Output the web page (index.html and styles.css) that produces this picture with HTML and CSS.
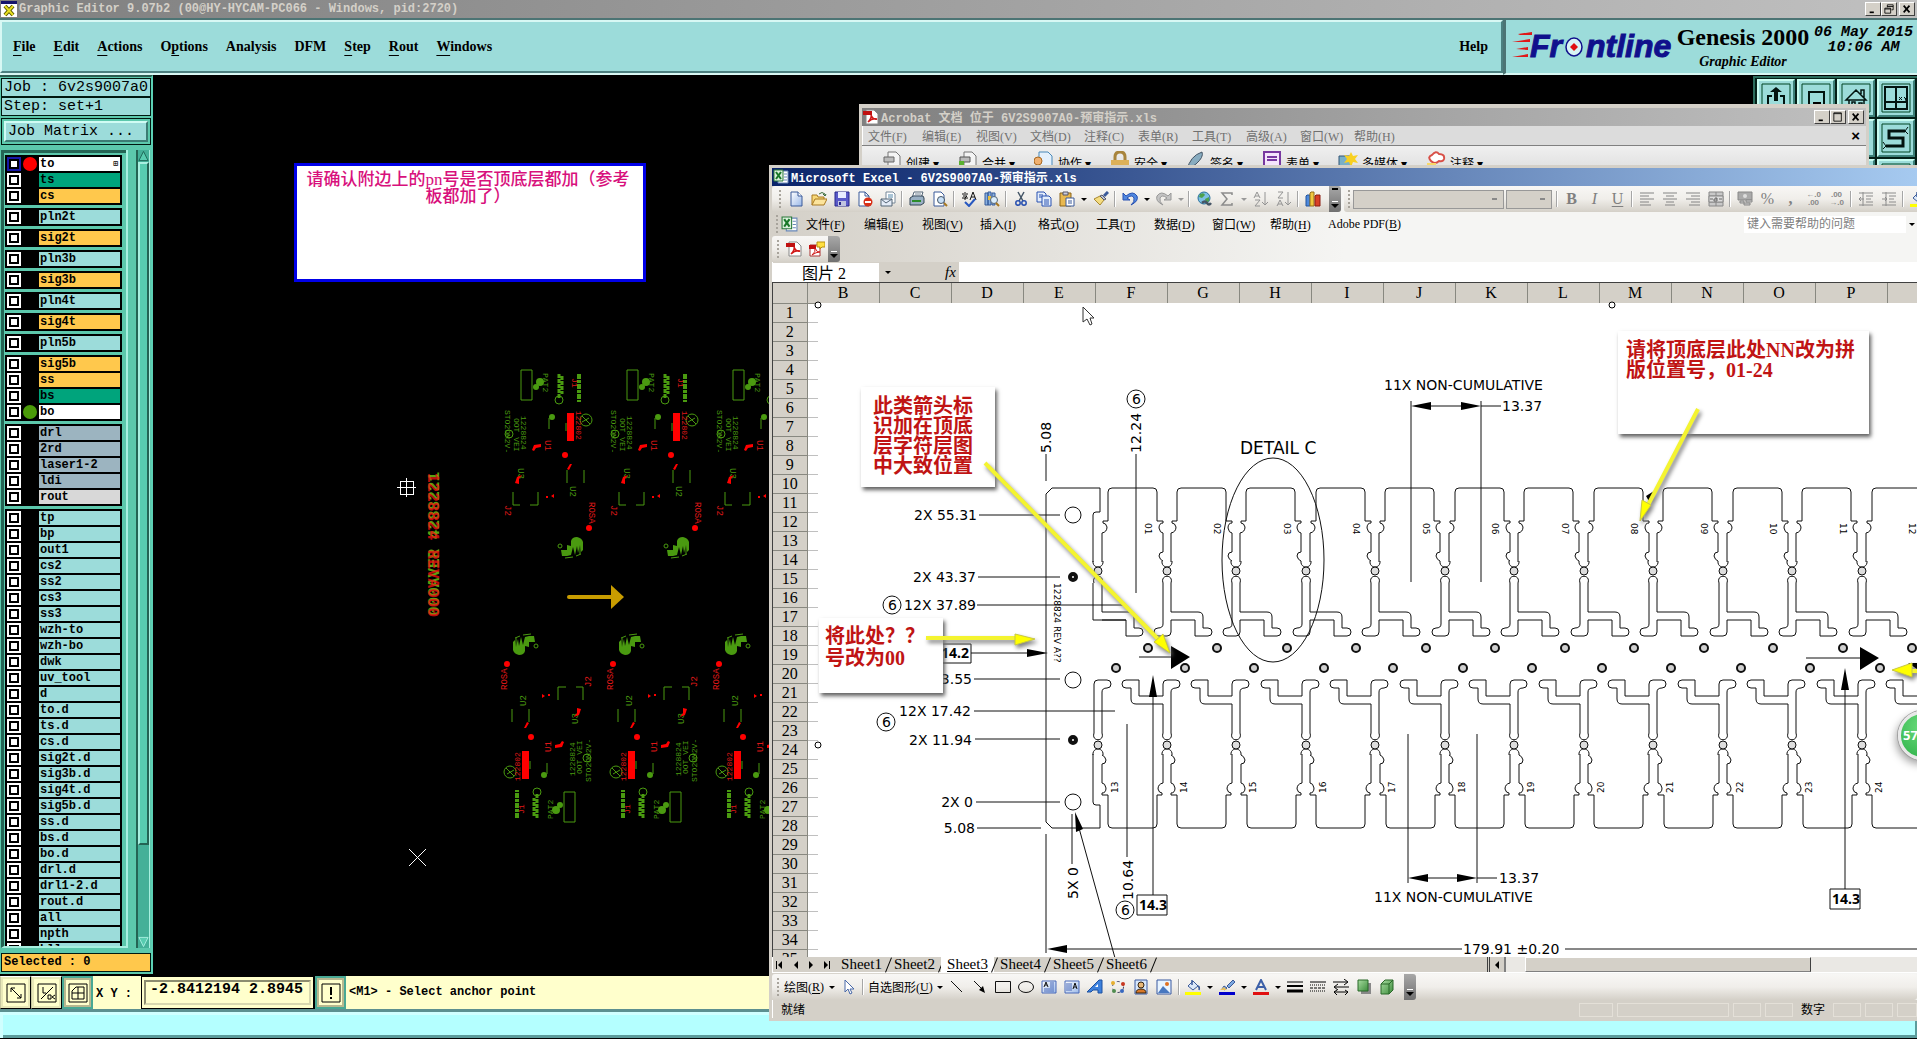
FILE: index.html
```html
<!DOCTYPE html>
<html lang="zh-CN">
<head>
    <meta charset="UTF-8">
    <meta name="viewport" content="width=device-width, initial-scale=1.0">
    <title>Graphic Editor 9.07b2</title>
    <link rel="stylesheet" href="styles.css">
</head>
<body>
<svg class="sprite" aria-hidden="true">
    <defs>
        <linearGradient id="blue" x1="0" y1="0" x2="1" y2="1"><stop offset="0" stop-color="#fff"/><stop offset="1" stop-color="#9ab8e8"/></linearGradient>
        <linearGradient id="green" x1="0" y1="0" x2="1" y2="1"><stop offset="0" stop-color="#a8dca0"/><stop offset="1" stop-color="#3c8c3c"/></linearGradient>
    </defs>
    <symbol id="i-new" viewBox="0 0 16 16"><path d="M3 1h7l4 4v10H3z" fill="url(#blue)" stroke="#3a5a9a"/><path d="M10 1v4h4" fill="#fff" stroke="#3a5a9a"/></symbol>
    <symbol id="i-open" viewBox="0 0 16 16"><path d="M1 14V4h5l1 2h6v3" fill="#f8d878" stroke="#a87820"/><path d="M1 14l3-6h12l-3 6z" fill="#fce49c" stroke="#a87820"/><path d="M8 3q3-3 6 0v2m-2-2l2 2 1-2" fill="none" stroke="#3a6a3a"/></symbol>
    <symbol id="i-save" viewBox="0 0 16 16"><path d="M1 1h14v14H1z" fill="#5a5ac8" stroke="#28288c"/><path d="M4 1h8v6H4z" fill="#e8ecff"/><path d="M4 10h8v5H4z" fill="#c0c4e0"/><path d="M5 11h2v3H5z" fill="#28288c"/></symbol>
    <symbol id="i-perm" viewBox="0 0 16 16"><path d="M2 1h6l4 4v10H2z" fill="#fff" stroke="#3a5a9a"/><path d="M8 1v4h4" fill="none" stroke="#3a5a9a"/><circle cx="11" cy="11" r="4.500" fill="#d83018"/><path d="M8 11h6" stroke="#fff" stroke-width="2"/></symbol>
    <symbol id="i-mail" viewBox="0 0 16 16"><path d="M6 1h7l2 2v9H6z" fill="#fff" stroke="#789"/><path d="M8 4h5M8 6h5" stroke="#58a"/><path d="M1 8h11v7H1z" fill="#e4ecf8" stroke="#567"/><path d="M1 8l5 4 6-4" fill="none" stroke="#567"/></symbol>
    <symbol id="i-print" viewBox="0 0 16 16"><path d="M5 1h9l-2 6H3z" fill="#fff" stroke="#567"/><path d="M1 7l3-2h10l1 2v5l-3 2H1z" fill="#9ab0c4" stroke="#345"/><path d="M3 10h9" stroke="#2c8c2c" stroke-width="2"/><path d="M6 3h6M5 5h6" stroke="#789"/></symbol>
    <symbol id="i-preview" viewBox="0 0 16 16"><path d="M2 1h7l3 3v11H2z" fill="#fff" stroke="#3a5a9a"/><circle cx="9" cy="9" r="3.500" fill="#c8e0f8" stroke="#456"/><path d="M12 12l3 3" stroke="#a87820" stroke-width="2"/></symbol>
    <symbol id="i-spell" viewBox="0 0 16 16"><path d="M1 3h6M4 1v1M2 5h4L4 7v2M1 7h6M9 9l3-8 3 8M10 6h4" fill="none" stroke="#111"/><path d="M4 11l4 4 6-7" fill="none" stroke="#2858c0" stroke-width="2"/></symbol>
    <symbol id="i-research" viewBox="0 0 16 16"><path d="M1 2h3v12H1zM4 1h3v13H4zM8 2h3v12H8z" fill="#8ab0e0" stroke="#345a9a"/><path d="M4 5h3v4H4z" fill="#e8c040"/><circle cx="10" cy="9" r="3.500" fill="#dceefc" stroke="#567"/><path d="M12 12l3 3" stroke="#a87820" stroke-width="2"/></symbol>
    <symbol id="i-cut" viewBox="0 0 16 16"><path d="M5 1l5 9M11 1l-5 9" stroke="#456" stroke-width="1.500"/><circle cx="5" cy="12" r="2.200" fill="none" stroke="#2850b0" stroke-width="1.500"/><circle cx="11" cy="12" r="2.200" fill="none" stroke="#2850b0" stroke-width="1.500"/></symbol>
    <symbol id="i-copy" viewBox="0 0 16 16"><path d="M1 1h7l2 2v8H1z" fill="#e4eefc" stroke="#2850b0"/><path d="M6 5h7l2 2v8H6z" fill="#e4eefc" stroke="#2850b0"/><path d="M8 9h5M8 11h5M8 13h5M3 4h4M3 6h3" stroke="#2850b0"/></symbol>
    <symbol id="i-paste" viewBox="0 0 16 16"><path d="M1 2h11v13H1z" fill="#e8b850" stroke="#8c6418"/><path d="M4 1h5v3H4z" fill="#ccd" stroke="#556"/><path d="M7 7h8v8H7z" fill="#fff" stroke="#3a5a9a"/><path d="M9 10h4M9 12h4" stroke="#3a5a9a"/></symbol>
    <symbol id="i-brush" viewBox="0 0 16 16"><path d="M1 8l6 6 4-5-4-4z" fill="#f4dc80" stroke="#a88830"/><path d="M7 5l4 4 2-1-4-4z" fill="#bcc4d4" stroke="#556"/><path d="M11 5l4-4" stroke="#3a5a9a" stroke-width="3"/></symbol>
    <symbol id="i-undo" viewBox="0 0 16 16"><path d="M1 2v7h7L5 7q5-4 7 0 1 4-3 7 8-4 6-9-4-6-11 0z" fill="#5088e0" stroke="#2850b0"/></symbol>
    <symbol id="i-redo" viewBox="0 0 16 16"><path d="M15 2v7H8l3-2Q6 3 4 7q-1 4 3 7-8-4-6-9 4-6 11 0z" fill="#c4c4c4" stroke="#989898"/></symbol>
    <symbol id="i-link" viewBox="0 0 16 16"><circle cx="8" cy="7" r="6" fill="#7cc0e4" stroke="#28709c"/><path d="M4 3q4-2 5 1l-3 3-3-1zM9 8l4-2v4l-3 2z" fill="#4ca04c"/><path d="M6 12q3-3 5 0t4 0" fill="none" stroke="#456" stroke-width="2.500"/></symbol>
    <symbol id="i-sum" viewBox="0 0 16 16"><path d="M13 4V2H3l5 6-5 6h10v-2" fill="none" stroke="#8c8c8c" stroke-width="1.500"/></symbol>
    <symbol id="i-sort" viewBox="0 0 16 16"><path d="M1 7l3-6 3 6M2 5h4M2 9h5l-5 6h5M12 1v13M9 11l3 3 3-3" fill="none" stroke="#949494"/></symbol>
    <symbol id="i-sortd" viewBox="0 0 16 16"><path d="M2 1h5L2 7h5M1 15l3-6 3 6M2 13h4M12 1v13M9 11l3 3 3-3" fill="none" stroke="#949494"/></symbol>
    <symbol id="i-chart" viewBox="0 0 16 16"><path d="M1 5l1-1h3v11H1z" fill="#4c88dc" stroke="#23549c"/><path d="M5 2l1-1h3v14H5z" fill="#f0c840" stroke="#94701c"/><path d="M10 5l1-1h4v11h-5z" fill="#d84028" stroke="#8c1c10"/></symbol>
    <symbol id="i-left" viewBox="0 0 16 16"><path d="M1 2h14M1 5h9M1 8h14M1 11h9M1 14h11" stroke="#848484"/></symbol>
    <symbol id="i-center" viewBox="0 0 16 16"><path d="M1 2h14M4 5h8M1 8h14M4 11h8M3 14h10" stroke="#848484"/></symbol>
    <symbol id="i-right" viewBox="0 0 16 16"><path d="M1 2h14M6 5h9M1 8h14M6 11h9M4 14h11" stroke="#848484"/></symbol>
    <symbol id="i-merge" viewBox="0 0 16 16"><path d="M1 1h14v14H1zM1 5h14M1 11h14M8 1v4M8 11v4" fill="#c8c8c8" stroke="#888"/><path d="M1 5h14v6H1z" fill="#ddd" stroke="#888"/><path d="M2 8h3M11 8h3M7 7h2v3H6V8h3" fill="none" stroke="#666"/></symbol>
    <symbol id="i-money" viewBox="0 0 16 16"><path d="M1 1h14v8H1z" fill="#aaa" stroke="#888"/><circle cx="8" cy="5" r="2" fill="#ddd"/><path d="M9 9h6v2H9zM7 12h6v2H7zM3 10h4v2H3z" fill="#ccc" stroke="#888"/></symbol>
    <symbol id="i-indent" viewBox="0 0 16 16"><path d="M1 2h14M8 5h7M8 8h5M8 11h7M1 14h14M5 1v14M1 8h5M3 6L1 8l2 2" fill="none" stroke="#8c8c8c"/></symbol>
    <symbol id="i-outdent" viewBox="0 0 16 16"><path d="M1 2h14M8 5h7M8 8h5M8 11h7M1 14h14M5 1v14M1 8h5M4 6l2 2-2 2" fill="none" stroke="#8c8c8c"/></symbol>
    <symbol id="i-fill" viewBox="0 0 16 16"><path d="M3 7l5-5 5 5-5 4z" fill="#dce8f8" stroke="#3a5a9a"/><path d="M7 6V1M13 7q2 1 1 4" fill="none" stroke="#3a5a9a" stroke-width="1.500"/><path d="M0 13h16v3H0z" fill="#ff0"/></symbol>
    <symbol id="i-pen" viewBox="0 0 16 16"><path d="M3 10q3 2 5-1l-3-2zM8 7l6-6 2 2-6 6z" fill="#7ca8e0" stroke="#3a5a9a"/><path d="M1 11l4-3 3 3z" fill="#e8c060"/><path d="M0 13h16v3H0z" fill="#00c"/></symbol>
    <symbol id="i-fontcolor" viewBox="0 0 16 16"><path d="M3 11l5-10 5 10M5 8h6" fill="none" stroke="#3c60a8" stroke-width="2"/><path d="M0 13h16v3H0z" fill="#e01010"/></symbol>
    <symbol id="i-pdf" viewBox="0 0 16 16"><path d="M3 1h8l4 4v10H3z" fill="#fff" stroke="#888"/><path d="M0 2h9v4H0z" fill="#c01010"/><path d="M5 13q4-4 3-7 2 5 6 4-5-1-9 3z" fill="none" stroke="#d01818" stroke-width="1.500"/></symbol>
    <symbol id="i-pdfmail" viewBox="0 0 16 16"><path d="M1 4h10v11H1z" fill="#fff" stroke="#a33"/><path d="M0 4h7v4H0z" fill="#c01010"/><path d="M3 14q4-3 3-7 2 5 5 4-4 0-8 3z" fill="none" stroke="#d01818"/><path d="M8 1h8v5h-3l-2 2V6H8z" fill="#ffe040" stroke="#b89010"/></symbol>
    <symbol id="i-excel" viewBox="0 0 16 16"><path d="M5 2h10v12H5z" fill="#fff" stroke="#6888b8"/><path d="M11 5h3M11 8h3M11 11h3" stroke="#6888b8"/><path d="M1 1h9v11H1z" fill="#dcf0dc" stroke="#287838"/><path d="M3 3l5 7M8 3l-5 7" stroke="#187828" stroke-width="2"/></symbol>
    <symbol id="i-pointer" viewBox="0 0 16 16"><path d="M4 1v12l3-3 2 5 2-1-2-4h4z" fill="#fff" stroke="#4868a8"/></symbol>
    <symbol id="i-line" viewBox="0 0 16 16"><path d="M2 2l11 11" stroke="#111"/></symbol>
    <symbol id="i-arrow" viewBox="0 0 16 16"><path d="M2 2l9 9" stroke="#111"/><path d="M13 14l-6-3 4-4z"/></symbol>
    <symbol id="i-rect" viewBox="0 0 16 16"><path d="M0.500 2.500h15v11h-15z" fill="none" stroke="#111"/></symbol>
    <symbol id="i-oval" viewBox="0 0 16 16"><ellipse cx="8" cy="8" rx="7.500" ry="5.500" fill="none" stroke="#111"/></symbol>
    <symbol id="i-text" viewBox="0 0 16 16"><path d="M1 2h14v12H1z" fill="url(#blue)" stroke="#4868b8"/><path d="M3 8l2-5 2 5M4 6h2" fill="none" stroke="#111"/><path d="M9 4h4M9 6h4M9 8h4M3 10h10M3 12h10" stroke="#4868b8"/></symbol>
    <symbol id="i-vtext" viewBox="0 0 16 16"><path d="M1 2h14v12H1z" fill="url(#blue)" stroke="#4868b8"/><path d="M3 4v8M5 4v8M7 4v8" stroke="#4868b8"/><path d="M9 10l2-6 2 6M10 8h2" fill="none" stroke="#111"/></symbol>
    <symbol id="i-wordart" viewBox="0 0 16 16"><path d="M0 13L12 1h3v13h-4v-3H6l-2 2z" fill="#3c80dc" stroke="#1c50a0"/><path d="M8 8l3-3v3z" fill="#fff"/></symbol>
    <symbol id="i-diagram" viewBox="0 0 16 16"><circle cx="8" cy="8" r="5.500" fill="none" stroke="#446" stroke-dasharray="3 3"/><circle cx="3" cy="4" r="2" fill="#e8b030"/><circle cx="13" cy="5" r="2" fill="#c83820"/><circle cx="12" cy="12" r="2" fill="#3868c0"/><circle cx="4" cy="12" r="2" fill="#508c50"/></symbol>
    <symbol id="i-clip" viewBox="0 0 16 16"><path d="M2 1h12v14H2z" fill="#d8e8fc" stroke="#3858a0"/><circle cx="8" cy="6" r="3" fill="#e8b878" stroke="#321"/><path d="M3 14q0-4 5-4t5 4z" fill="#d87828" stroke="#321"/></symbol>
    <symbol id="i-image" viewBox="0 0 16 16"><path d="M1 1h14v14H1z" fill="#e8f4ff" stroke="#3858a0"/><circle cx="11" cy="5" r="2" fill="#e07020"/><path d="M2 14l5-7 7 7z" fill="#4878c0"/></symbol>
    <symbol id="i-weight" viewBox="0 0 16 16"><path d="M0 3h16" stroke="#000" stroke-width="1"/><path d="M0 7h16" stroke="#000" stroke-width="2"/><path d="M0 12h16" stroke="#000" stroke-width="3"/></symbol>
    <symbol id="i-dash" viewBox="0 0 16 16"><path d="M0 3h16" stroke="#000"/><path d="M0 6h16M0 12h16" stroke="#000" stroke-dasharray="1 1"/><path d="M0 9h16" stroke="#000" stroke-dasharray="3 1"/></symbol>
    <symbol id="i-arrows" viewBox="0 0 16 16"><path d="M0 3h14M2 8h14M1 13h14M11 0l4 3-4 3M5 5L1 8l4 3M4 11l-3 2 3 3M12 11l3 2-3 3" fill="none" stroke="#000"/></symbol>
    <symbol id="i-shadow" viewBox="0 0 16 16"><path d="M5 4h10v11H5z" fill="#888"/><path d="M2 1h10v11H2z" fill="url(#green)" stroke="#286828"/></symbol>
    <symbol id="i-cube" viewBox="0 0 16 16"><path d="M2 5l4-4h8v10l-4 4H2z" fill="url(#green)" stroke="#286828"/><path d="M2 5h8v10M10 5l4-4" fill="none" stroke="#286828"/></symbol>
</svg>

<div class="genesis">
    <div class="titlebar inactive">
        <svg class="app-icon" viewBox="0 0 16 16"><path d="M0 0h16v16H0z" fill="#fff"/><path d="M0 0h16v3H0z" fill="#14146c"/><path d="M4 5l8 9M12 5l-8 9" stroke="#555500" stroke-width="4"/><path d="M4 5l8 9M12 5l-8 9" stroke="#e8e020" stroke-width="2"/></svg>
        <span class="title">Graphic Editor 9.07b2 (00@HY-HYCAM-PC066 - Windows, pid:2720)</span>
        <button class="win-btn" title="Minimize"><svg viewBox="0 0 12 12"><path d="M2 9h5v2H2z"/></svg></button>
        <button class="win-btn" title="Restore"><svg viewBox="0 0 12 12"><path d="M4 1h7v6H9M4 3h7M4 1v3M1 5h7v6H1zM1 6h7" fill="none" stroke="#000"/></svg></button>
        <button class="win-btn close" title="Close"><svg viewBox="0 0 12 12"><path d="M2 2l7 8M9 2l-7 8" stroke="#000" stroke-width="2"/></svg></button>
    </div>

    <header class="top">
        <nav class="menu">
            <a href="#"><u>F</u>ile</a><a href="#"><u>E</u>dit</a><a href="#"><u>A</u>ctions</a><a href="#">O<u>p</u>tions</a><a href="#">Analysis</a><a href="#">DFM</a><a href="#"><u>S</u>tep</a><a href="#"><u>R</u>out</a><a href="#"><u>W</u>indows</a>
            <a href="#" class="help">Help</a>
        </nav>
        <div class="brand">
            <svg class="logo" width="162" height="36">
                <g fill="#e01818"><path d="M6 4l14-2v3H8zM0 12l18-3v3zM4 19l12-2v3zM0 27l16-3v3z"/></g>
                <g class="logo-text"><text x="18" y="27">Fr</text><text x="74" y="27">ntline</text></g>
                <ellipse cx="62" cy="17" rx="8" ry="9" fill="#d8f4f4" stroke="#10108c" stroke-width="1.500"/>
                <path d="M62 13l4 4-4 4-4-4z" fill="#e01010"/>
            </svg>
            <div class="product"><b>Genesis 2000</b><i>Graphic Editor</i></div>
            <div class="clock"><span>06 May 2015</span><span>10:06 AM</span></div>
        </div>
    </header>

    <main class="work">
        <aside class="side">
            <div class="info">Job : 6v2s9007a0</div>
            <div class="info">Step: set+1</div>
            <div class="matrix"><button>Job Matrix ...</button></div>
            <div class="layers">
                <div class="layer-list" id="layers"></div>
                <div class="scroll">
                    <button class="up" title="Up"><svg viewBox="0 0 12 12"><path d="M6 1l5 10H1z" fill="#58ccb0" stroke="#1c6454"/></svg></button>
                    <div class="thumb"></div>
                    <button class="down" title="Down"><svg viewBox="0 0 12 12"><path d="M6 11L1 1h10z" fill="#58ccb0" stroke="#a8f0e0"/></svg></button>
                </div>
            </div>
            <div class="selected">Selected : 0</div>
        </aside>

        <div class="canvas">
            <svg class="board-view">
                <g transform="translate(-153 -75)">
                    <g fill="none" stroke="#fff" shape-rendering="crispEdges">
                        <path d="M400 481h13v13h-13zM397 487h19M406 478v19"/>
                    </g>
                    <path d="M409 849l17 17M426 849l-17 17" stroke="#fff"/>
                    <g class="pn">
                        <text class="pn-green" transform="translate(439 616) rotate(-90)">000AVER 4288221</text>
                        <text class="pn-red" transform="translate(428 473) rotate(90)">1228824 REVA000</text>
                    </g>
                    <path d="M569 597h42" stroke="#c89c00" stroke-width="4" stroke-linecap="round"/>
                    <path d="M611 585l13 12-13 12z" fill="#c89c00"/>
                    <!-- first placement of the silkscreen, repeated by script.js -->
                    <g transform="translate(503 360)">
                        <g id="silk">
                            <g fill="none" stroke="#4a9a10">
                                <path d="M18 10h11v30H18zM46 69V58M64 110v13M81 110v13M10 132v13h7M27 145h8v-13M63 63v8M77 183v11"/>
                                <circle cx="83" cy="60" r="6"/><path d="M79 56l8 8M79 62l7-4"/>
                                <circle cx="6" cy="74" r="4"/><circle cx="56" cy="40" r="4"/>
                                <path d="M56 14v24M59 16v18" stroke-width="3" stroke-dasharray="4 1"/>
                                <path d="M76 14v28" stroke-width="4" stroke-dasharray="5 1 3 1"/>
                                <path d="M62 198l8-1M73 196l5-2"/>
                                <circle cx="57" cy="186" r="2"/>
                            </g>
                            <g fill="#4a9a10">
                                <circle cx="37" cy="22" r="4"/><circle cx="33" cy="27" r="3"/><circle cx="49" cy="57" r="3"/>
                                <path d="M58 190h6v-5l4 1v-5q1-4 6-4 5 1 6 5v8l-2 2-1-7-2 8-1-7-2 9-2-8-2 8-4 1-5 0z"/>
                            </g>
                            <g class="silk-green">
                                <text transform="translate(40 13) rotate(90)">PAT2</text>
                                <text transform="translate(2 50) rotate(90)">STO2OM2V-</text>
                                <text transform="translate(11 58) rotate(90)">OOT VEI</text>
                                <text transform="translate(18 56) rotate(90)">1228824</text>
                            </g>
                            <g class="silk-big silk-green">
                                <text transform="translate(15 108) rotate(90)">U3</text>
                                <text transform="translate(67 126) rotate(90)">U2</text>
                            </g>
                            <g fill="#f00">
                                <path d="M64 53h7v28h-7z"/><circle cx="62" cy="95" r="3"/><circle cx="86" cy="168" r="3"/>
                                <path d="M29 90l2-5 7-1v3l-5 1-2 3zM64 109l3-5h2l-3 6zM12 123l2-6 5-2-3 4v5zM43 136h2v2h-2zM48 136l3-2v4z"/>
                            </g>
                            <g class="silk-red">
                                <text transform="translate(73 51) rotate(90)">122802</text>
                                <text transform="translate(69 18) rotate(90)">J1</text>
                            </g>
                            <g class="silk-big silk-red">
                                <text transform="translate(42 80) rotate(90)">U1</text>
                                <text transform="translate(2 145) rotate(90)">J2</text>
                                <text transform="translate(86 142) rotate(90)">ROSA</text>
                            </g>
                        </g>
                    </g>
                    <g id="silks"></g>
                </g>
            </svg>
            <div class="note-blue">请确认附边上的pn号是否顶底层都加（参考板都加了）</div>
            <div class="tools">
                <button title="Export"><svg viewBox="0 0 30 30"><path d="M1 1h28v28H1z" fill="none" stroke="#042"/><path d="M15 4l6 5h-4v9h-4V9H9z" fill="#021410"/><path d="M11 13H7v18M19 13h4v18" fill="none" stroke="#021410" stroke-width="2"/></svg></button>
                <button title="Screen"><svg viewBox="0 0 30 30"><path d="M1 1h28v28H1z" fill="none" stroke="#042"/><path d="M8 9h15v14H8z" fill="none" stroke="#021410" stroke-width="2"/><path d="M12 19h8v4h-8z"/></svg></button>
                <button title="Home"><svg viewBox="0 0 30 30"><path d="M1 1h28v28H1z" fill="none" stroke="#042"/><path d="M5 17L15 7l10 10zM8 17v10h15V17M11 19h3v3h-3zM18 27v-7h3v7M20 11V7h3v8" fill="none" stroke="#021410" stroke-width="1.500"/></svg></button>
                <button title="Panes"><svg viewBox="0 0 30 30"><path d="M1 1h28v28H1z" fill="none" stroke="#042"/><path d="M4 4h22v22H4zM15 4v22M4 19h22" fill="none" stroke="#021410" stroke-width="2"/><path d="M18 14l3 3M21 14l-3 3M23 14l2 2v2" stroke="#021410"/></svg></button>
                <button title="Layer"></button><button title="Grid"></button><button title="Snap"></button>
                <button title="Serpentine"><svg viewBox="0 0 30 30"><path d="M1 1h28v28H1z" fill="none" stroke="#042"/><path d="M24 8H8v7h14v8H5" fill="none" stroke="#021410" stroke-width="3"/><path d="M27 4l-3 4 3 3M2 19l3 4-3 3" fill="none" stroke="#021410"/></svg></button>
                <button title="Zoom"></button><button title="Pan"></button><button title="Fit"></button>
                <button title="Select"><svg viewBox="0 0 30 30"><path d="M1 1h28v28H1z" fill="none" stroke="#042"/></svg></button>
            </div>
        </div>
    </main>

    <div class="command">
        <button title="Zoom"><svg viewBox="0 0 20 20"><path d="M1 1h18v18H1z" fill="none" stroke="#000"/><path d="M5 5l10 10M5 9V5h4M15 11v4h-4" fill="none" stroke="#000"/></svg></button>
        <button title="Units"><svg viewBox="0 0 20 20"><path d="M1 1h18v18H1z" fill="none" stroke="#000"/><path d="M4 16L16 4M6 4v6h3M11 12h3v4h-3zM18 12l-3 2 3 2" fill="none" stroke="#000"/></svg></button>
        <button class="on" title="Grid"><svg viewBox="0 0 20 20"><path d="M1 1h18v18H1z" fill="none" stroke="#000"/><path d="M8 4h8v12H4V8zM10 4v12M4 10h12" fill="none" stroke="#000"/></svg></button>
        <label for="xy">X Y :</label>
        <div class="xy-box"><input id="xy" type="text" value="-2.8412194 2.8945"></div>
        <button class="on" title="Info"><svg viewBox="0 0 20 20"><path d="M1 1h18v18H1z" fill="none" stroke="#000"/><path d="M10 4v8M10 14v2" stroke="#000" stroke-width="2"/></svg></button>
        <span class="message">&lt;M1&gt; - Select anchor point</span>
    </div>
    <div class="bottom-line"></div>
</div>

<div class="acrobat window">
    <div class="titlebar inactive">
        <svg class="app-icon"><use href="#i-pdf"/></svg>
        <span class="title">Acrobat 文档 位于 6V2S9007A0-预审指示.xls</span>
        <button class="win-btn" title="最小化"><svg viewBox="0 0 12 12"><path d="M2 9h5v2H2z"/></svg></button>
        <button class="win-btn" title="最大化"><svg viewBox="0 0 12 12"><path d="M1 1h9v10H1zM1 2h9" fill="none" stroke="#000"/></svg></button>
        <button class="win-btn close" title="关闭"><svg viewBox="0 0 12 12"><path d="M2 2l7 8M9 2l-7 8" stroke="#000" stroke-width="2"/></svg></button>
    </div>
    <nav class="acro-menu">
        <a href="#">文件(F)</a><a href="#">编辑(E)</a><a href="#">视图(V)</a><a href="#">文档(D)</a><a href="#">注释(C)</a><a href="#">表单(R)</a><a href="#">工具(T)</a><a href="#">高级(A)</a><a href="#">窗口(W)</a><a href="#">帮助(H)</a>
        <button class="doc-close" title="关闭文档">×</button>
    </nav>
    <div class="acro-tools">
        <button><svg viewBox="0 0 20 20"><path d="M6 1h8l4 4v14H6z" fill="#f4f4f4" stroke="#777"/><path d="M2 6h10v5H2z" fill="#bbb" stroke="#666"/></svg>创建 ▾</button>
        <button><svg viewBox="0 0 20 20"><path d="M6 1h8l4 4v14H6z" fill="#f4f4f4" stroke="#777"/><path d="M2 6h10v5H2z" fill="#bbb" stroke="#555"/><path d="M1 10h5v5H1z" fill="#5ab030"/></svg>合并 ▾</button>
        <button><svg viewBox="0 0 20 20"><path d="M5 1h9l4 4v14H5z" fill="#e4f0fc" stroke="#4888b8"/><circle cx="4" cy="10" r="4" fill="#f0b070" stroke="#a86820"/></svg>协作 ▾</button>
        <button><svg viewBox="0 0 20 20"><path d="M5 9V6q0-5 5-5t5 5v3" fill="none" stroke="#a8843c" stroke-width="3"/><path d="M1 9h18v10H1z" fill="#dcb058"/></svg>安全 ▾</button>
        <button><svg viewBox="0 0 20 20"><path d="M1 19q3-14 15-18 2 5-6 12z" fill="#88acc0" stroke="#456"/></svg>签名 ▾</button>
        <button><svg viewBox="0 0 20 20"><path d="M2 1h16v18H2z" fill="#f4e4fc" stroke="#7838a0" stroke-width="2"/><path d="M5 6h10M5 9h10" stroke="#7838a0" stroke-width="2"/></svg>表单 ▾</button>
        <button><svg viewBox="0 0 20 20"><path d="M1 5h12v12H1z" fill="#78b0c8" stroke="#357"/><path d="M13 1l2 4 5-1-3 4 3 4-5-1-2 5-2-5-5 1 3-4-3-4 5 1z" fill="#f8d020"/></svg>多媒体 ▾</button>
        <button><svg viewBox="0 0 20 20"><path d="M5 10q-4-4 1-6 4-5 7-1 6 0 5 5-1 3-5 2-4 4-8 0z" fill="#fff" stroke="#d85048" stroke-width="2"/><path d="M1 12h9v6H1z" fill="#f8d868"/></svg>注释 ▾</button>
    </div>
</div>

<div class="excel window">
    <div class="titlebar active">
        <svg class="app-icon"><use href="#i-excel"/></svg>
        <span class="title">Microsoft Excel - 6V2S9007A0-预审指示.xls</span>
    </div>
    <div class="dock">
        <div class="bar-row">
            <div class="toolbar">
                <button title="新建"><svg><use href="#i-new"/></svg></button>
                <button title="打开"><svg><use href="#i-open"/></svg></button>
                <button title="保存"><svg><use href="#i-save"/></svg></button>
                <button title="权限"><svg><use href="#i-perm"/></svg></button>
                <button title="电子邮件"><svg><use href="#i-mail"/></svg></button>
                <i class="sep"></i>
                <button title="打印"><svg><use href="#i-print"/></svg></button>
                <button title="打印预览"><svg><use href="#i-preview"/></svg></button>
                <i class="sep"></i>
                <button title="拼写检查"><svg><use href="#i-spell"/></svg></button>
                <button title="信息检索"><svg><use href="#i-research"/></svg></button>
                <i class="sep"></i>
                <button title="剪切"><svg><use href="#i-cut"/></svg></button>
                <button title="复制"><svg><use href="#i-copy"/></svg></button>
                <button title="粘贴"><svg><use href="#i-paste"/></svg></button><i class="drop"></i>
                <button title="格式刷"><svg><use href="#i-brush"/></svg></button>
                <i class="sep"></i>
                <button title="撤消"><svg><use href="#i-undo"/></svg></button><i class="drop"></i>
                <button title="恢复"><svg><use href="#i-redo"/></svg></button><i class="drop dim-drop"></i>
                <i class="sep"></i>
                <button title="超链接"><svg><use href="#i-link"/></svg></button>
                <button title="自动求和"><svg><use href="#i-sum"/></svg></button><i class="drop dim-drop"></i>
                <button title="升序排序"><svg><use href="#i-sort"/></svg></button>
                <button title="降序排序"><svg><use href="#i-sortd"/></svg></button>
                <i class="sep"></i>
                <button title="图表向导"><svg><use href="#i-chart"/></svg></button>
                <i class="cap more"></i>
            </div>
            <div class="toolbar format">
                <select class="font-name" aria-label="字体" disabled></select>
                <select class="font-size" aria-label="字号" disabled></select>
                <i class="sep"></i>
                <button class="glyph" title="加粗"><b>B</b></button>
                <button class="glyph" title="倾斜"><i>I</i></button>
                <button class="glyph" title="下划线"><u>U</u></button>
                <i class="sep"></i>
                <button title="左对齐"><svg><use href="#i-left"/></svg></button>
                <button title="居中"><svg><use href="#i-center"/></svg></button>
                <button title="右对齐"><svg><use href="#i-right"/></svg></button>
                <button title="合并及居中"><svg><use href="#i-merge"/></svg></button>
                <i class="sep"></i>
                <button title="货币样式"><svg><use href="#i-money"/></svg></button>
                <button class="glyph" title="百分比样式">%</button>
                <button class="glyph" title="千位分隔样式"><b>,</b></button>
                <button class="decimals" title="增加小数位数">←.0<br>.00</button>
                <button class="decimals" title="减少小数位数">.00<br>→.0</button>
                <i class="sep"></i>
                <button title="减少缩进量"><svg><use href="#i-indent"/></svg></button>
                <button title="增加缩进量"><svg><use href="#i-outdent"/></svg></button>
                <i class="sep"></i>
                <button title="填充颜色"><svg><use href="#i-fill"/></svg></button>
            </div>
        </div>
        <div class="bar-row menu-row">
            <nav class="xl-menu">
                <svg><use href="#i-excel"/></svg>
                <a href="#">文件(<u>F</u>)</a><a href="#">编辑(<u>E</u>)</a><a href="#">视图(<u>V</u>)</a><a href="#">插入(<u>I</u>)</a><a href="#">格式(<u>O</u>)</a><a href="#">工具(<u>T</u>)</a><a href="#">数据(<u>D</u>)</a><a href="#">窗口(<u>W</u>)</a><a href="#">帮助(<u>H</u>)</a><a href="#">Adobe PDF(<u>B</u>)</a>
            </nav>
            <input class="ask" type="text" aria-label="帮助问题" placeholder="键入需要帮助的问题">
            <i class="drop"></i>
        </div>
        <div class="bar-row">
            <div class="toolbar pdf-bar">
                <button title="转换为 PDF"><svg><use href="#i-pdf"/></svg></button>
                <button title="转换并发送"><svg><use href="#i-pdfmail"/></svg></button>
                <i class="cap"></i>
            </div>
        </div>
    </div>
    <div class="formula">
        <input class="name-box" type="text" aria-label="名称框" value="图片 2">
        <i class="drop"></i>
        <label class="fx" for="formula"><i>fx</i></label>
        <input class="formula-box" id="formula" type="text">
    </div>

    <div class="sheet">
        <table class="grid">
            <thead><tr id="cols"><th></th></tr></thead>
            <tbody id="rows"></tbody>
        </table>
        <div class="picture">
            <svg class="drawing">
                <defs>
                    <path id="tab" d="M4 562V533q5-1 5-6-1-4-4-4v-2h5V492q0-4 4-4h41q4 0 4 4v29h6v2q-4 0-4 5 1 5 4 5v19q-4 0-4 4 1 4 4 5"/>
                    <path id="bulb" d="M-5 561c-1 8 11 8 10 0M-4 583c-3-9 11-9 8 0"/>
                    <path id="slot" d="M4 583v29h27q5 0 5 5v11h5a4 4 0 0 1 0 8H28v-16H4"/>
                    <path id="foot" d="M4 620v12q0 4-4 4h-9a4 4 0 0 1 0-8q5 0 5-4v-41"/>
                </defs>
                <g transform="translate(-818 -303)">
                    <g class="ink">
                        <path d="M1100 512v-24h-48l-6 6v328l6 6h48v-23M1100 512h-4q-3 0-3 3v47M1100 805h-4q-3 0-3-3v-48"/>
                        <path d="M1093 583v37h33M1094 696v37"/>
                        <circle cx="1073" cy="515" r="8"/><circle cx="1073" cy="680" r="8"/><circle cx="1073" cy="802" r="8"/>
                        <circle cx="1073" cy="577" r="3" stroke-width="4"/><circle cx="1073" cy="740" r="3" stroke-width="4"/>
                        <g id="necks"></g>
                        <ellipse cx="1273" cy="560" rx="51" ry="102"/>
                        <path d="M1046 454v27M1136 454v139M979 515h81M978 577h82M977 605h147M971 653h60M974 679h86M974 711h141M975 739h85M976 802h84M977 828h64"/>
                        <path d="M1411 401v181M1481 401v181M1425 406h42M1481 406h20M1408 734v149M1477 734v149M1420 878h46M1477 878h20"/>
                        <path d="M1046 834v119M1060 949h402M1565 949h400M1072 814v50M1127 724v133M1153 690v205M1845 690v199M1139 657h34M1806 658h56M1079 828l36 130"/>
                        <path d="M930 644h41v19h-41zM1137 895h30v20h-30zM1830 889h30v20h-30z"/>
                        <circle cx="892" cy="605" r="9"/><circle cx="886" cy="722" r="9"/><circle cx="1136" cy="399" r="9"/><circle cx="1125" cy="910" r="9"/>
                    </g>
                    <path d="M1171 646l19 11-19 12zM1860 647l19 11-19 12zM1048 653l-21-4v8zM1411 406l20-4v8zM1481 406l-20-4v8zM1408 878l20-4v8zM1477 878l-20-4v8zM1047 949l20-4v8zM1153 675l-4 22h8zM1845 668l-4 22h8zM1075 812l1 20 7-3z"/>
                    <g class="dim">
                        <text x="977" y="520" class="end">2X 55.31</text>
                        <text x="976" y="582" class="end">2X 43.37</text>
                        <text x="976" y="610" class="end">12X 37.89</text>
                        <text x="972" y="684" class="end">3.55</text>
                        <text x="971" y="716" class="end">12X 17.42</text>
                        <text x="972" y="745" class="end">2X 11.94</text>
                        <text x="973" y="807" class="end">2X 0</text>
                        <text x="975" y="833" class="end">5.08</text>
                        <text x="888" y="610">6</text><text x="882" y="727">6</text>
                        <text x="1132" y="404">6</text><text x="1121" y="915">6</text>
                        <text transform="translate(1051 453) rotate(-90)">5.08</text>
                        <text transform="translate(1141 453) rotate(-90)">12.24</text>
                        <text transform="translate(1078 899) rotate(-90)">5X 0</text>
                        <text transform="translate(1133 900) rotate(-90)">10.64</text>
                        <text x="1384" y="390">11X NON-CUMULATIVE</text>
                        <text x="1502" y="411">13.37</text>
                        <text x="1499" y="883">13.37</text>
                        <text x="1374" y="902">11X NON-CUMULATIVE</text>
                        <text x="1463" y="954">179.91 ±0.20</text>
                        <text x="1240" y="454" class="detail">DETAIL C</text>
                    </g>
                    <g class="flag">
                        <text x="969" y="658" class="end">14.2</text>
                        <text x="1139" y="910">14.3</text>
                        <text x="1832" y="904">14.3</text>
                    </g>
                    <text class="rev" transform="translate(1054 583) rotate(90)">1228824 REV A??</text>
                    <g id="marks" class="mark"></g>
                    <g fill="#fff" stroke="#000"><circle cx="818" cy="305" r="3"/><circle cx="1612" cy="305" r="3"/><circle cx="818" cy="745" r="3"/></g>
                </g>
            </svg>
            <div class="note note-a">此类箭头标识加在顶底层字符层图中大致位置</div>
            <div class="note note-b">将此处？？<br>号改为00</div>
            <div class="note note-c">请将顶底层此处NN改为拼版位置号，01-24</div>
            <svg class="drawing pointers">
                <g transform="translate(-818 -303)">
                    <path d="M1646 496l4 7 4-12zM1908 663l12 0v8z"/>
                    <g stroke="#f4f430" stroke-width="4" fill="none">
                        <path d="M985 463l174 177M926 638h92M1698 409l-50 96M1908 671h12"/>
                    </g>
                    <g fill="#ff0" stroke="#c8c840">
                        <path d="M1170 653l-16-11 9-8zM1035 639l-20-5v11zM1640 521l2-21 9 5zM1892 670l20-7v14z"/>
                    </g>
                </g>
            </svg>
            <svg class="cursor" width="14" height="20" viewBox="0 0 14 20"><path d="M1 1v15l4-3 3 6 2-1-2-6h4z" fill="#fff" stroke="#333"/></svg>
        </div>
    </div>

    <div class="tabs-row">
        <div class="nav-btns">
            <button title="第一张"><svg viewBox="0 0 8 8"><path d="M0 0h1v8H0zM6 0v8L2 4z"/></svg></button>
            <button title="上一张"><svg viewBox="0 0 8 8"><path d="M6 0v8L2 4z"/></svg></button>
            <button title="下一张"><svg viewBox="0 0 8 8"><path d="M2 0v8l4-4z"/></svg></button>
            <button title="最后一张"><svg viewBox="0 0 8 8"><path d="M1 0v8l4-4zM6 0h1v8H6z"/></svg></button>
        </div>
        <div class="tabs">
            <button>Sheet1</button><button>Sheet2</button><button class="current">Sheet3</button><button>Sheet4</button><button>Sheet5</button><button>Sheet6</button>
        </div>
        <div class="hscroll">
            <button title="向左"><svg viewBox="0 0 8 8"><path d="M6 0v8L2 4z"/></svg></button>
            <div class="htrough"><div class="hthumb"></div></div>
        </div>
    </div>

    <div class="draw-row">
        <div class="toolbar draw-bar">
            <button class="word">绘图(<u>R</u>)</button><i class="drop"></i>
            <button title="选择对象"><svg><use href="#i-pointer"/></svg></button>
            <i class="sep"></i>
            <button class="word">自选图形(<u>U</u>)</button><i class="drop"></i>
            <button title="直线"><svg><use href="#i-line"/></svg></button>
            <button title="箭头"><svg><use href="#i-arrow"/></svg></button>
            <button title="矩形"><svg><use href="#i-rect"/></svg></button>
            <button title="椭圆"><svg><use href="#i-oval"/></svg></button>
            <button title="文本框"><svg><use href="#i-text"/></svg></button>
            <button title="竖排文本框"><svg><use href="#i-vtext"/></svg></button>
            <button title="艺术字"><svg><use href="#i-wordart"/></svg></button>
            <button title="组织结构图"><svg><use href="#i-diagram"/></svg></button>
            <button title="剪贴画"><svg><use href="#i-clip"/></svg></button>
            <button title="图片"><svg><use href="#i-image"/></svg></button>
            <i class="sep"></i>
            <button title="填充颜色"><svg><use href="#i-fill"/></svg></button><i class="drop"></i>
            <button title="线条颜色"><svg><use href="#i-pen"/></svg></button><i class="drop"></i>
            <button title="字体颜色"><svg><use href="#i-fontcolor"/></svg></button><i class="drop"></i>
            <button title="线型"><svg><use href="#i-weight"/></svg></button>
            <button title="虚线线型"><svg><use href="#i-dash"/></svg></button>
            <button title="箭头样式"><svg><use href="#i-arrows"/></svg></button>
            <button title="阴影样式"><svg><use href="#i-shadow"/></svg></button>
            <button title="三维效果样式"><svg><use href="#i-cube"/></svg></button>
            <i class="cap"></i>
        </div>
    </div>
    <div class="xl-status">
        <span class="ready">就绪</span>
        <span class="cell w34"></span><span class="cell w112"></span><span class="cell w28"></span><span class="cell w28"></span><span class="num">数字</span><span class="cell w28"></span><span class="cell w28"></span><span class="cell w20"></span>
    </div>
</div>

<div class="badge">57</div>

<script src="script.js"></script>
</body>
</html>
```

FILE: styles.css
```css
* {
    box-sizing: border-box;
}
body {
    margin: 0;
    height: 100vh;
    position: relative;
    overflow: hidden;
    background: #000;
    font-family: "Liberation Serif", "Noto Sans CJK SC", serif;
    font-size: 12px;
    color: #000;
}
button, input, select {
    font: inherit;
    color: inherit;
    border: 0;
    padding: 0;
    margin: 0;
    background: none;
    border-radius: 0;
}
a {
    color: inherit;
    text-decoration: none;
}
u {
    text-underline-offset: 2px;
}
.sprite {
    position: absolute;
    width: 0;
    height: 0;
}

/* title bars */
.titlebar {
    display: flex;
    align-items: center;
    height: 18px;
    flex: none;
    padding-right: 2px;
    font: bold 12px "Liberation Mono", "Noto Sans CJK SC", monospace;
    white-space: nowrap;
}
.titlebar.inactive {
    background: linear-gradient(to right, #808080, #c0c0c0);
    color: #d4d0c8;
}
.titlebar.active {
    background: linear-gradient(to right, #0a246a, #a6caf0);
    color: #fff;
}
.app-icon {
    width: 16px;
    height: 16px;
    margin: 0 2px 0 1px;
}
.title {
    flex: 1;
}
.win-btn {
    width: 16px;
    height: 14px;
    background: #d4d0c8;
    border: 1px solid;
    border-color: #fff #404040 #404040 #fff;
    display: flex;
    align-items: center;
    justify-content: center;
}
.win-btn svg {
    width: 10px;
    height: 10px;
}
.win-btn.close {
    margin-left: 2px;
}

/* main editor */
.genesis {
    height: 100%;
    display: flex;
    flex-direction: column;
}
.top {
    display: flex;
    height: 57px;
    flex: none;
    background: #9cdcda;
    border-top: 2px solid #4c7474;
}
.menu {
    flex: 1;
    display: flex;
    align-items: center;
    gap: 18px;
    padding: 0 13px 0 11px;
    border: 2px solid;
    border-color: #d8f8f4 #4c8080 #4c8080 #d8f8f4;
    box-shadow: 0 2px #d8f8f4;
    margin-bottom: 2px;
    font-weight: bold;
    font-size: 14px;
}
.menu .help {
    margin-left: auto;
}
.menu u {
    text-underline-offset: 4px;
}
.brand {
    width: 414px;
    display: flex;
    padding: 3px 2px 0 6px;
    border-left: 3px solid #4c7474;
    border-bottom: 2px solid #d8f8f4;
    white-space: nowrap;
}
.logo {
    margin-top: 7px;
    flex: none;
    overflow: visible;
}
.logo-text {
    font: italic bold 32px "Liberation Sans", sans-serif;
    fill: #10108c;
    stroke: #10108c;
}
.product {
    display: flex;
    flex-direction: column;
    align-items: center;
    width: 138px;
}
.product b {
    font-size: 24px;
    line-height: 28px;
}
.product i {
    font-size: 14px;
    font-weight: bold;
    line-height: 22px;
}
.clock {
    flex: 1;
    display: flex;
    flex-direction: column;
    align-items: center;
    font: italic bold 15px/15px "Liberation Mono", monospace;
    padding-top: 2px;
}
.work {
    flex: 1;
    display: flex;
    min-height: 0;
    border-bottom: 2px solid #000;
}
.side {
    width: 153px;
    flex: none;
    display: flex;
    flex-direction: column;
    background: #5cc8ac;
    border-top: 2px solid #2c5c50;
    border-right: 2px solid #5cd0b4;
    padding: 1px 0 2px 1px;
    font: bold 12px "Liberation Mono", monospace;
}
.info, .selected {
    height: 19px;
    border: 1px solid #001810;
    background: #9cdcda;
    padding-left: 2px;
    font-size: 15px;
    line-height: 17px;
    white-space: nowrap;
    font-weight: normal;
}
.selected {
    background: #ffc84c;
    margin-top: 5px;
    font-size: 12px;
    font-weight: bold;
}
.matrix {
    margin: 2px 0 5px;
    padding: 2px;
    border: 1px solid #001810;
}
.matrix button {
    display: block;
    width: 100%;
    height: 21px;
    background: #9cdcda;
    border: 2px solid;
    border-color: #d0fcf4 #3c7c74 #3c7c74 #d0fcf4;
    font-size: 15px;
    font-weight: normal;
    line-height: 17px;
    text-align: left;
    padding-left: 2px;
}
.layers {
    flex: 1;
    display: flex;
    min-height: 0;
}
.layer-list {
    width: 125px;
    overflow: hidden;
    border-top: 3px solid #246454;
    border-left: 3px solid #246454;
    border-bottom: 2px solid #a8f0e0;
    box-shadow: 2px 0 #a8f0e0;
    padding: 2px 4px 0 1px;
}
.group {
    background: #000;
    padding: 2px;
    margin-bottom: 3px;
    display: flex;
    flex-direction: column;
    gap: 2px;
}
.layer {
    display: flex;
    height: 14px;
}
.layer input {
    appearance: none;
    width: 14px;
    height: 14px;
    background: #fff;
    border: 2px solid #fff;
    outline: 2px solid #000;
    outline-offset: -4px;
}
.layer.work-layer input {
    border-color: #1818a8;
}
.dot {
    width: 14px;
    height: 14px;
    margin: 0 2px;
    border-radius: 50%;
}
.dot.red {
    background: #f00;
}
.dot.green {
    background: #4a9a08;
}
.layer label {
    flex: 1;
    display: flex;
    justify-content: space-between;
    line-height: 14px;
    padding: 0 2px 0 1px;
    background: #9cdcda;
}
.layer label span {
    font-size: 8px;
}
.layer .white {
    background: #fff;
}
.layer .mask {
    background: #00a47c;
}
.layer .signal {
    background: #ffc84c;
}
.layer .drill {
    background: #9cb4c0;
}
.layer .route {
    background: #d8d8d8;
}
.scroll {
    margin-left: auto;
    width: 14px;
    display: flex;
    flex-direction: column;
    background: #44b098;
    border-left: 2px solid #246454;
    margin-right: 1px;
    border-right: 1px solid #a8f0e0;
}
.scroll button {
    height: 12px;
    line-height: 0;
}
.scroll button svg {
    width: 11px;
    height: 12px;
}
.thumb {
    height: 683px;
    flex: 0 1 683px;
    background: #58ccb0;
    border: 2px solid;
    border-color: #a8f0e0 #246454 #246454 #a8f0e0;
}
.scroll .down {
    margin-top: auto;
}
.canvas {
    flex: 1;
    position: relative;
    overflow: hidden;
}
.board-view {
    position: absolute;
    width: 100%;
    height: 100%;
}
.silk-green, .silk-red {
    font: 8px "Liberation Mono", monospace;
    fill: #4a9a10;
}
.silk-red {
    fill: #e01818;
}
.silk-big {
    font-size: 9px;
}
.pn {
    font: bold 16px "Liberation Mono", monospace;
}
.pn-red {
    fill: #f01010;
    fill-opacity: 0.8;
}
.pn-green {
    fill: #5aa010;
}
.note-blue {
    position: absolute;
    left: 141px;
    top: 88px;
    width: 352px;
    height: 119px;
    border: 3px solid #0000e8;
    background: #fff;
    color: #d8107c;
    font-size: 17px;
    font-weight: 500;
    line-height: 17px;
    text-align: center;
    padding: 5px 8px 5px 4px;
}
.tools {
    position: absolute;
    top: 1px;
    right: 0;
    display: grid;
    grid-template-columns: repeat(4, 38px);
    gap: 2px;
    padding: 1px 2px 2px;
    background: #042018;
    border-left: 2px solid #2c6c5c;
    border-top: 2px solid #2c6c5c;
}
.tools button {
    height: 38px;
    background: #9cdcda;
    border: 2px solid;
    border-color: #c8fcf0 #3c8078 #3c8078 #c8fcf0;
    padding: 2px;
}
.tools svg {
    width: 30px;
    height: 30px;
    display: block;
}

/* command line */
.command {
    height: 33px;
    flex: none;
    display: flex;
    background: #ffffcc;
    font: bold 12px "Liberation Mono", monospace;
}
.command button {
    width: 31px;
    padding: 4px;
    border: 1px solid;
    border-color: #fff #000 #000 #c8c8a0;
    box-shadow: inset 0 0 0 2px #e8e8b8;
}
.command button.on {
    border: 2px solid #48a894;
    box-shadow: inset 0 0 0 2px #b8b890;
}
.command svg {
    width: 20px;
    height: 20px;
    display: block;
    margin: auto;
}
.command label {
    width: 48px;
    padding-left: 3px;
    line-height: 36px;
    white-space: nowrap;
}
.xy-box {
    width: 174px;
    border: 1px solid #000;
    border-right-width: 2px;
    padding: 3px 2px;
}
.xy-box input {
    width: 100%;
    height: 100%;
    border: 2px solid;
    border-color: #8c8c70 #d8d8b0 #d8d8b0 #8c8c70;
    font-size: 15px;
    padding: 0 0 6px 4px;
}
.message {
    line-height: 32px;
    padding-left: 3px;
    white-space: pre;
}
.bottom-line {
    height: 30px;
    flex: none;
    background: #b4ffff;
    border-top: 3px solid #5c9090;
    border-bottom: 1px solid #000;
    box-shadow: inset 3px 3px #d0ffff, inset -2px -3px #5c9c9c;
}

/* windows over the editor */
.window {
    position: absolute;
    display: flex;
    flex-direction: column;
    border: 3px solid #d4d0c8;
    box-shadow: inset 1px 1px #fff;
}
.acrobat {
    left: 859px;
    top: 104px;
    right: 48px;
    height: 80px;
    border-top-width: 4px;
    background: #dcdcdc;
}
.acro-menu {
    display: flex;
    align-items: center;
    height: 20px;
    flex: none;
    gap: 14px;
    padding: 0 6px;
    color: #707070;
    border-bottom: 1px solid #808080;
}
.acro-menu a {
    width: 40px;
    white-space: nowrap;
}
.doc-close {
    margin-left: auto;
    font: bold 15px/16px "Liberation Sans", sans-serif;
    color: #000;
}
.acro-tools {
    flex: 1;
    display: flex;
    gap: 19px;
    padding: 5px 20px;
    background: linear-gradient(#f0f0f0, #d8d8d8);
    overflow: hidden;
}
.acro-tools button {
    display: flex;
    gap: 4px;
    align-items: flex-start;
    white-space: nowrap;
    line-height: 26px;
    height: 26px;
}
.acro-tools svg {
    width: 20px;
    height: 20px;
}
.excel {
    left: 769px;
    top: 165px;
    right: -3px;
    bottom: 18px;
    background: #d4d0c8;
}
.dock {
    background: linear-gradient(to right, #d4d0c8, #f5f5f3 50%);
    flex: none;
}
.bar-row {
    display: flex;
    height: 26px;
    align-items: stretch;
    overflow: hidden;
}
.menu-row {
    height: 24px;
    align-items: center;
}
.toolbar {
    display: flex;
    align-items: center;
    flex: none;
    height: 26px;
    padding-left: 7px;
    background: linear-gradient(#f8f7f5, #f0eeea 50%, #d4d0c8);
    border-radius: 3px;
    position: relative;
}
.toolbar::before, .xl-menu::before {
    content: "";
    width: 2px;
    height: 18px;
    margin-right: 3px;
    background: repeating-linear-gradient(#a8a49c 0 2px, transparent 2px 4px);
}
.toolbar button {
    width: 23px;
    height: 22px;
    flex: none;
    display: flex;
    align-items: center;
    justify-content: center;
}
.toolbar button svg {
    width: 16px;
    height: 16px;
}
.toolbar .word {
    width: auto;
    white-space: nowrap;
    padding: 0 2px;
}
.sep {
    width: 1px;
    height: 16px;
    margin: 0 3px 0 2px;
    background: #a6a6a6;
    box-shadow: 1px 0 #fff;
    flex: none;
}
.drop {
    width: 11px;
    flex: none;
}
.drop::after {
    content: "";
    display: block;
    width: 0;
    margin: auto;
    border: 3px solid transparent;
    border-top-color: #000;
    border-bottom: 0;
}
.dim-drop::after {
    border-top-color: #999;
}
.cap {
    width: 12px;
    height: 26px;
    margin-left: 5px;
    background: linear-gradient(#a8a8a8, #707070);
    border-radius: 0 3px 3px 0;
    display: flex;
    flex-direction: column;
    justify-content: flex-end;
    align-items: center;
}
.pdf-bar .cap {
    margin-left: 0;
}
.pdf-bar, .draw-bar {
    padding-left: 5px;
}
.cap::after {
    content: "";
    border: 4px solid transparent;
    border-top-color: #000;
    border-bottom: 0;
    margin-bottom: 4px;
}
.cap::before {
    content: "";
    width: 6px;
    height: 1px;
    background: #fff;
    margin-bottom: 2px;
}
.cap.more::before {
    height: 14px;
    background: linear-gradient(#000 0 2px, transparent 2px 13px, #fff 13px);
}
.format {
    margin-left: 3px;
    padding-left: 4px;
}
.format select {
    appearance: none;
    height: 19px;
    border: 1px solid #989898;
    background: linear-gradient(#888, #888) right 6px center / 5px 2px no-repeat #d4d0c8;
    margin-right: 2px;
    opacity: 1;
}
.font-name {
    width: 151px;
}
.font-size {
    width: 46px;
}
.toolbar .glyph {
    font-size: 16px;
    color: #808080;
}
.toolbar .decimals {
    font: bold 8px/8px "Liberation Sans", sans-serif;
    color: #888;
    white-space: nowrap;
}
.xl-menu {
    flex: 1;
    display: flex;
    align-items: center;
    padding-left: 4px;
}
.xl-menu svg {
    width: 17px;
    height: 17px;
    margin-right: 8px;
}
.xl-menu a {
    width: 58px;
    flex: none;
    white-space: nowrap;
}
.xl-menu a:last-child {
    width: auto;
}
.ask {
    width: 162px;
    height: 17px;
    background: #fff;
    padding-left: 3px;
}
.ask::placeholder {
    color: #808080;
    opacity: 1;
}
.formula {
    display: flex;
    align-items: center;
    height: 20px;
    flex: none;
    padding-left: 1px;
}
.name-box {
    width: 106px;
    height: 19px;
    background: #fff;
    font-size: 16px;
    padding-left: 29px;
}
.formula .drop {
    width: 18px;
}
.fx {
    flex: none;
    width: 62px;
    font-size: 15px;
    padding-left: 48px;
    line-height: 18px;
}
.formula-box {
    flex: 1;
    height: 20px;
    background: #fff;
}

/* worksheet */
.sheet {
    flex: 1;
    min-height: 0;
    position: relative;
    overflow: hidden;
    background: #fff;
    border-left: 1px solid #404040;
    border-top: 1px solid #404040;
}
.grid {
    table-layout: fixed;
    border-collapse: collapse;
    width: 1186px;
    font-size: 16px;
    line-height: 16px;
}
.grid th {
    background: #d4d0c8;
    border: 1px solid #888880;
    border-top: 0;
    font-weight: normal;
    padding: 0;
    width: 72px;
    height: 19px;
}
.grid thead th {
    height: 20px;
    padding-top: 1px;
}
.grid th:first-child {
    width: 34px;
    border-left: 0;
}
.grid td {
    border: 1px solid #c0c0c0;
    padding: 0;
}
.picture {
    position: absolute;
    left: 45px;
    top: 20px;
    right: 0;
    bottom: 0;
    background: #fff;
}
.drawing {
    position: absolute;
    left: 0;
    top: 0;
    width: 100%;
    height: 100%;
    overflow: visible;
}
.ink {
    fill: none;
    stroke: #101010;
}
.hole {
    fill: #d0d0d0;
    stroke-width: 2;
}
.dim, .flag {
    font: 14px "DejaVu Sans", sans-serif;
}
.detail {
    font-size: 17px;
}
.end {
    text-anchor: end;
}
.flag {
    font: bold 14px "Noto Sans", sans-serif;
}
.rev {
    font: 9px "DejaVu Sans", sans-serif;
}
.mark {
    font: 9px "DejaVu Sans", sans-serif;
}
.note {
    position: absolute;
    background: #fff;
    box-shadow: 2px 3px 4px #606060;
    color: #c01414;
    font-size: 20px;
    line-height: 20px;
    font-weight: bold;
}
.note-a {
    left: 43px;
    top: 84px;
    width: 134px;
    height: 100px;
    padding: 9px 14px 9px 12px;
}
.note-b {
    left: 1px;
    top: 315px;
    width: 124px;
    height: 75px;
    padding: 7px 6px;
    line-height: 22px;
}
.note-c {
    left: 800px;
    top: 28px;
    width: 251px;
    height: 103px;
    padding: 9px 8px;
}
.pointers {
    filter: drop-shadow(2px 3px 2px #808080);
}
.cursor {
    position: absolute;
    left: 264px;
    top: 3px;
}

/* sheet tabs */
.tabs-row {
    height: 16px;
    flex: none;
    display: flex;
    border-bottom: 1px solid #fff;
}
.nav-btns {
    display: flex;
    width: 63px;
    flex: none;
}
.nav-btns button {
    width: 16px;
    line-height: 0;
}
.nav-btns svg, .hscroll svg {
    width: 8px;
    height: 8px;
}
.tabs {
    display: flex;
    font-size: 15px;
    line-height: 15px;
    width: 652px;
    flex: none;
}
.tabs button {
    width: 53px;
    position: relative;
    line-height: 15px;
    padding-bottom: 2px;
}
.tabs button::after {
    content: "";
    position: absolute;
    right: -1px;
    top: 0;
    width: 1px;
    height: 16px;
    background: #000;
    transform: rotate(22deg);
}
.tabs .current {
    background: #fff;
    text-decoration: underline;
    text-underline-offset: 2px;
}
.hscroll {
    flex: 1;
    display: flex;
    border-left: 3px double #404040;
}
.hscroll button {
    width: 16px;
    border-right: 2px solid #808080;
    line-height: 0;
}
.htrough {
    flex: 1;
    padding-left: 19px;
    background: #eae8e4;
}
.hthumb {
    width: 286px;
    height: 15px;
    background: #d4d0c8;
    border: 1px solid;
    border-color: #fff #404040 #808080 #fff;
}
.draw-row {
    height: 27px;
    flex: none;
    padding-top: 1px;
    background: linear-gradient(to right, #d4d0c8, #f5f5f3 50%);
}
.xl-status {
    height: 18px;
    flex: none;
    display: flex;
    align-items: center;
    gap: 4px;
    padding-top: 2px;
    line-height: 16px;
    overflow: hidden;
}
.ready {
    flex: 1;
    padding-left: 9px;
}
.cell {
    height: 14px;
    border: 1px solid #e4e0d8;
    flex: none;
}
.num {
    width: 32px;
    text-align: center;
}
.w34 {
    width: 34px;
}
.w112 {
    width: 112px;
}
.w28 {
    width: 28px;
}
.w20 {
    width: 20px;
}

.badge {
    position: absolute;
    right: -30px;
    top: 711px;
    width: 49px;
    height: 49px;
    border-radius: 50%;
    background: radial-gradient(circle at 50% 30%, #6cdc7c, #2cb048);
    border: 3px solid #e8e8e8;
    box-shadow: 0 0 0 1px #a0a0a0, -2px 4px 8px #a0a0a0;
    color: #fff;
    font: bold 13px/42px "Noto Sans", sans-serif;
    padding-left: 2px;
}
```

FILE: script.js
```js
// layer groups, top to bottom: [name, colour class]
const groups = [
    [['to', 'white'], ['ts', 'mask'], ['cs', 'signal']],
    [['pln2t', '']], [['sig2t', 'signal']], [['pln3b', '']], [['sig3b', 'signal']],
    [['pln4t', '']], [['sig4t', 'signal']], [['pln5b', '']],
    [['sig5b', 'signal'], ['ss', 'signal'], ['bs', 'mask'], ['bo', 'white']],
    [['drl', 'drill'], ['2rd', 'drill'], ['laser1-2', 'drill'], ['ldi', 'drill'], ['rout', 'route']],
    ['tp', 'bp', 'out1', 'cs2', 'ss2', 'cs3', 'ss3', 'wzh-to', 'wzh-bo', 'dwk', 'uv_tool', 'd',
     'to.d', 'ts.d', 'cs.d', 'sig2t.d', 'sig3b.d', 'sig4t.d', 'sig5b.d', 'ss.d', 'bs.d', 'bo.d',
     'drl.d', 'drl1-2.d', 'rout.d', 'all', 'npth', 'bll'].map(n => [n, ''])
];
const dots = { to: 'red', bo: 'green' };

document.getElementById('layers').innerHTML = groups.map(g =>
    '<div class="group">' + g.map(([name, cls]) => `
        <div class="layer ${name === 'to' ? 'work-layer' : ''}">
            <input type="checkbox" id="l-${name}">
            <span class="dot ${dots[name] || ''}"></span>
            <label for="l-${name}" class="${cls}">${name}${name === 'to' ? '<span>⊞</span>' : ''}</label>
        </div>`).join('') + '</div>').join('');

// worksheet headings
document.getElementById('cols').innerHTML += [...'BCDEFGHIJKLMNOPQ'].map(c => `<th>${c}</th>`).join('');
let rows = '';
for (let i = 1; i <= 35; i++) {
    rows += `<tr><th>${i}</th>${'<td></td>'.repeat(16)}</tr>`;
}
document.getElementById('rows').innerHTML = rows;

// silkscreen: three placements, and the same turned by 180 degrees
let silks = '';
for (let i = 0; i < 3; i++) {
    const x = 503 + i * 106;
    if (i > 0) {
        silks += `<use href="#silk" x="${x}" y="360"/>`;
    }
    silks += `<g transform="rotate(180 ${x + 45} 596)"><use href="#silk" x="${x}" y="360"/></g>`;
}
document.getElementById('silks').innerHTML = silks;

// panel: 12 boards above and 12 below, 69.5 apart
let necks = '';
let marks = '';
for (let k = -1; k < 12; k++) {
    const x = Math.round(1167 + k * 69.45);
    const turn = `translate(${x} 0) rotate(180 0 658)`;
    necks += `<g transform="translate(${x} 0)"><use href="#tab"/><use href="#bulb"/><use href="#slot"/>
        ${k >= 0 ? '<use href="#foot"/>' : ''}<circle cx="0" cy="571" r="4" fill="#ddd"/></g>`;
    necks += `<g transform="${turn}">${k >= 0 ? '<use href="#tab"/><use href="#slot"/>' : ''}
        <use href="#bulb"/><use href="#foot"/><circle cx="0" cy="571" r="4" fill="#ddd"/></g>`;
    necks += `<circle class="hole" cx="${x + 18}" cy="668" r="4"/>`;
    if (k >= 0) {
        necks += `<circle class="hole" cx="${x - 19}" cy="648" r="4"/>`;
        marks += `<text transform="translate(${x - 22} 523) rotate(90)">${String(k + 1).padStart(2, '0')}</text>`;
    }
    if (k < 11) {
        marks += `<text transform="translate(${x + 20} 793) rotate(-90)">${k + 14}</text>`;
    }
}
document.getElementById('necks').innerHTML = necks;
document.getElementById('marks').innerHTML = marks;
```
